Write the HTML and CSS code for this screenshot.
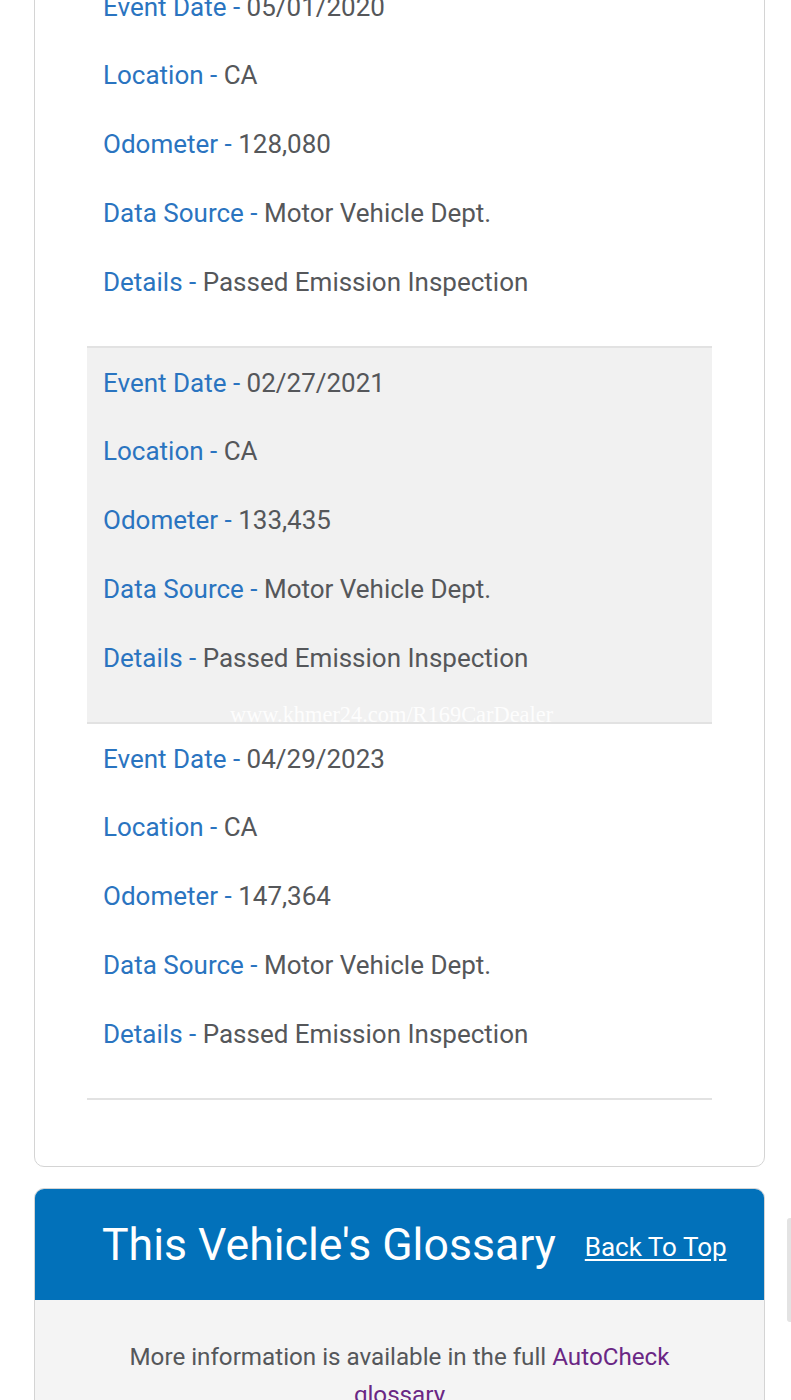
FILE: index.html
```html
<!DOCTYPE html>
<html lang="en">
<head>
<meta charset="utf-8">
<title>Vehicle History</title>
<link rel="stylesheet" href="styles.css">
</head>
<body>
<div class="page">
  <section class="history-card">
    <div class="event">
      <p class="item"><span class="label">Event Date - </span><span class="value">05/01/2020</span></p>
      <p class="item"><span class="label">Location - </span><span class="value">CA</span></p>
      <p class="item"><span class="label">Odometer - </span><span class="value">128,080</span></p>
      <p class="item"><span class="label">Data Source - </span><span class="value">Motor Vehicle Dept.</span></p>
      <p class="item"><span class="label">Details - </span><span class="value">Passed Emission Inspection</span></p>
    </div>
    <div class="event shaded">
      <p class="item"><span class="label">Event Date - </span><span class="value">02/27/2021</span></p>
      <p class="item"><span class="label">Location - </span><span class="value">CA</span></p>
      <p class="item"><span class="label">Odometer - </span><span class="value">133,435</span></p>
      <p class="item"><span class="label">Data Source - </span><span class="value">Motor Vehicle Dept.</span></p>
      <p class="item"><span class="label">Details - </span><span class="value">Passed Emission Inspection</span></p>
      <span class="watermark">www.khmer24.com/R169CarDealer</span>
    </div>
    <div class="event">
      <p class="item"><span class="label">Event Date - </span><span class="value">04/29/2023</span></p>
      <p class="item"><span class="label">Location - </span><span class="value">CA</span></p>
      <p class="item"><span class="label">Odometer - </span><span class="value">147,364</span></p>
      <p class="item"><span class="label">Data Source - </span><span class="value">Motor Vehicle Dept.</span></p>
      <p class="item"><span class="label">Details - </span><span class="value">Passed Emission Inspection</span></p>
    </div>
  </section>

  <section class="glossary-card">
    <header class="glossary-head">
      <h2 class="glossary-title">This Vehicle's Glossary</h2>
      <a class="back-top" href="#">Back To Top</a>
    </header>
    <div class="glossary-body">
      <p>More information is available in the full <a class="glossary-link" href="#">AutoCheck glossary</a></p>
    </div>
  </section>
</div>
<div class="scroll-thumb"></div>
</body>
</html>
```

FILE: styles.css
```css
html, body {
  margin: 0;
  padding: 0;
  background: #ffffff;
  font-family: Roboto, "Noto Sans", Arial, sans-serif;
}

.page {
  display: flex;
  flex-direction: column;
  gap: 21px;
  padding: 0 26px 0 34px;
}

.history-card {
  margin-top: -60px;
  border: 1px solid #d4d4d4;
  border-radius: 10px;
  padding: 31px 52px 66px 52px;
  background: #fff;
}

.event {
  position: relative;
  display: flex;
  flex-direction: column;
  gap: 40.75px;
  padding: 20.5px 16px 50.5px 16px;
  border-bottom: 2px solid #e2e2e2;
}

.event.shaded {
  background: #f1f1f1;
}

.item {
  margin: 0;
  font-size: 26px;
  line-height: 28px;
  white-space: nowrap;
}

.label {
  color: #2a74c0;
}

.value {
  color: #55575a;
}

.watermark {
  position: absolute;
  left: 143px;
  bottom: -6px;
  font-family: "Liberation Serif", "Times New Roman", serif;
  font-size: 22.4px;
  color: rgba(255, 255, 255, 0.9);
  white-space: nowrap;
}

.glossary-card {
  border: 1px solid #d4d4d4;
  border-radius: 10px 10px 0 0;
  overflow: hidden;
  background: #f4f4f4;
}

.glossary-head {
  display: flex;
  align-items: center;
  gap: 29px;
  height: 111px;
  padding: 0 38px 0 67px;
  background: #0271ba;
}

.glossary-title {
  margin: 0;
  font-weight: 400;
  font-size: 44.6px;
  line-height: 50px;
  color: #ffffff;
  white-space: nowrap;
}

.back-top {
  color: #ffffff;
  font-size: 26px;
  line-height: 30px;
  text-decoration: underline;
  text-underline-offset: 3px;
  white-space: nowrap;
  margin-top: 4px;
}

.glossary-body {
  padding: 38px 80px 40px;
  text-align: center;
}

.glossary-body p {
  margin: 0;
  font-size: 24.2px;
  line-height: 38px;
  color: #55575a;
}

.glossary-link {
  color: #6a2784;
  text-decoration: none;
}

.scroll-thumb {
  position: absolute;
  top: 1218px;
  right: 0;
  width: 4px;
  height: 104px;
  border-radius: 3px 0 0 3px;
  background: #e3e3e3;
}
```
